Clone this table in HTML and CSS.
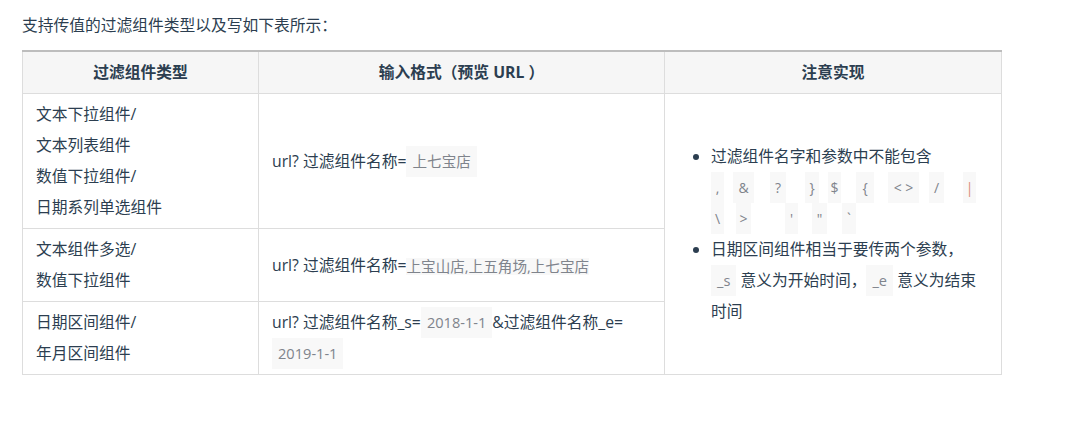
FILE: index.html
```html
<!DOCTYPE html>
<html lang="zh-CN">
<head>
<meta charset="utf-8">
<title>过滤组件传值</title>
<link rel="stylesheet" href="styles.css">
</head>
<body>
<div class="page">
  <p class="intro">支持传值的过滤组件类型以及写如下表所示：</p>
  <table class="tbl">
    <colgroup>
      <col class="col-type">
      <col class="col-format">
      <col class="col-note">
    </colgroup>
    <thead>
      <tr>
        <th>过滤组件类型</th>
        <th>输入格式（预览 URL ）</th>
        <th>注意实现</th>
      </tr>
    </thead>
    <tbody>
      <tr>
        <td>文本下拉组件/<br>文本列表组件<br>数值下拉组件/<br>日期系列单选组件</td>
        <td>url? 过滤组件名称=<code class="val">上七宝店</code></td>
        <td class="notes" rowspan="3">
          <ul class="note-list">
            <li>过滤组件名字和参数中不能包含
              <div class="sym-row"><code class="sym">,</code><code class="sym">&amp;</code><code class="sym">?</code><code class="sym">}</code><code class="sym">$</code><code class="sym">{</code><code class="sym">&lt; &gt;</code><code class="sym">/</code><code class="sym sym-red">|</code></div>
              <div class="sym-row"><code class="sym">\</code><code class="sym">&gt;</code><code class="sym">'</code><code class="sym">"</code><code class="sym">`</code></div>
            </li>
            <li>日期区间组件相当于要传两个参数，<code class="val">_s</code> 意义为开始时间，<code class="val">_e</code> <span>意义为结束</span><span>时间</span></li>
          </ul>
        </td>
      </tr>
      <tr>
        <td>文本组件多选/<br>数值下拉组件</td>
        <td>url? 过滤组件名称=<code class="val-flat">上宝山店,上五角场,上七宝店</code></td>
      </tr>
      <tr>
        <td>日期区间组件/<br>年月区间组件</td>
        <td>url? 过滤组件名称_s=<code class="val">2018-1-1</code>&amp;过滤组件名称_e=<code class="val">2019-1-1</code></td>
      </tr>
    </tbody>
  </table>
</div>
</body>
</html>
```

FILE: styles.css
```css
html, body {
  margin: 0;
  background: #ffffff;
}

body {
  font-family: "Open Sans", "Noto Sans CJK SC", sans-serif;
  font-size: 15.75px;
  line-height: 31px;
  color: #2c3e50;
}

.page {
  padding: 10px 22px;
}

.intro {
  margin: 0 0 9px;
}

.tbl {
  border-collapse: collapse;
  table-layout: fixed;
  width: 979px;
  border-top: 2px solid #bdbdbd;
}

.col-type { width: 236px; }
.col-format { width: 406px; }
.col-note { width: 337px; }

.tbl th,
.tbl td {
  border: 1px solid #dddddd;
  padding: 5px 13px;
  vertical-align: middle;
}

.tbl th {
  background: #f6f6f6;
  font-weight: bold;
  text-align: center;
}

.tbl thead th {
  border-top: 2px solid #bdbdbd;
}

.tbl td {
  text-align: left;
}

.val {
  display: inline-block;
  vertical-align: top;
  padding: 0 6px;
  font-family: "Open Sans", "Noto Sans CJK SC", sans-serif;
  font-size: 14.6px;
  line-height: 31px;
  background: #f8f8f8;
  color: #7f848c;
}

.val-flat {
  display: inline-block;
  vertical-align: middle;
  font-family: "Open Sans", "Noto Sans CJK SC", sans-serif;
  font-size: 14.6px;
  line-height: 17px;
  background: #f8f8f8;
  color: #7f848c;
}

.note-list {
  margin: 0;
  padding-left: 33px;
}

.note-list li {
  margin: 0;
}

.sym-row {
  font-size: 0;
  line-height: 31px;
  height: 31px;
}

.sym {
  display: inline-block;
  vertical-align: top;
  height: 31px;
  line-height: 31px;
  text-align: center;
  font-family: "Open Sans", "Noto Sans CJK SC", sans-serif;
  font-size: 14px;
  background: #f8f8f8;
  color: #7f848c;
}

.sym-red {
  color: #d98a78;
}

/* first row of symbol chips */
.sym-row:nth-of-type(1) .sym:nth-child(1) { width: 13px; margin-right: 9px; }
.sym-row:nth-of-type(1) .sym:nth-child(2) { width: 21px; margin-right: 16px; }
.sym-row:nth-of-type(1) .sym:nth-child(3) { width: 16px; margin-right: 19px; }
.sym-row:nth-of-type(1) .sym:nth-child(4) { width: 14px; margin-right: 9px; }
.sym-row:nth-of-type(1) .sym:nth-child(5) { width: 13px; margin-right: 15px; }
.sym-row:nth-of-type(1) .sym:nth-child(6) { width: 18px; margin-right: 14px; }
.sym-row:nth-of-type(1) .sym:nth-child(7) { width: 31px; margin-right: 10px; }
.sym-row:nth-of-type(1) .sym:nth-child(8) { width: 15px; margin-right: 19px; }
.sym-row:nth-of-type(1) .sym:nth-child(9) { width: 13px; }

/* second row of symbol chips */
.sym-row:nth-of-type(2) .sym:nth-child(1) { width: 13px; margin-right: 12px; }
.sym-row:nth-of-type(2) .sym:nth-child(2) { width: 15px; margin-right: 34px; }
.sym-row:nth-of-type(2) .sym:nth-child(3) { width: 13px; margin-right: 14px; }
.sym-row:nth-of-type(2) .sym:nth-child(4) { width: 15px; margin-right: 15px; }
.sym-row:nth-of-type(2) .sym:nth-child(5) { width: 14px; }
```
